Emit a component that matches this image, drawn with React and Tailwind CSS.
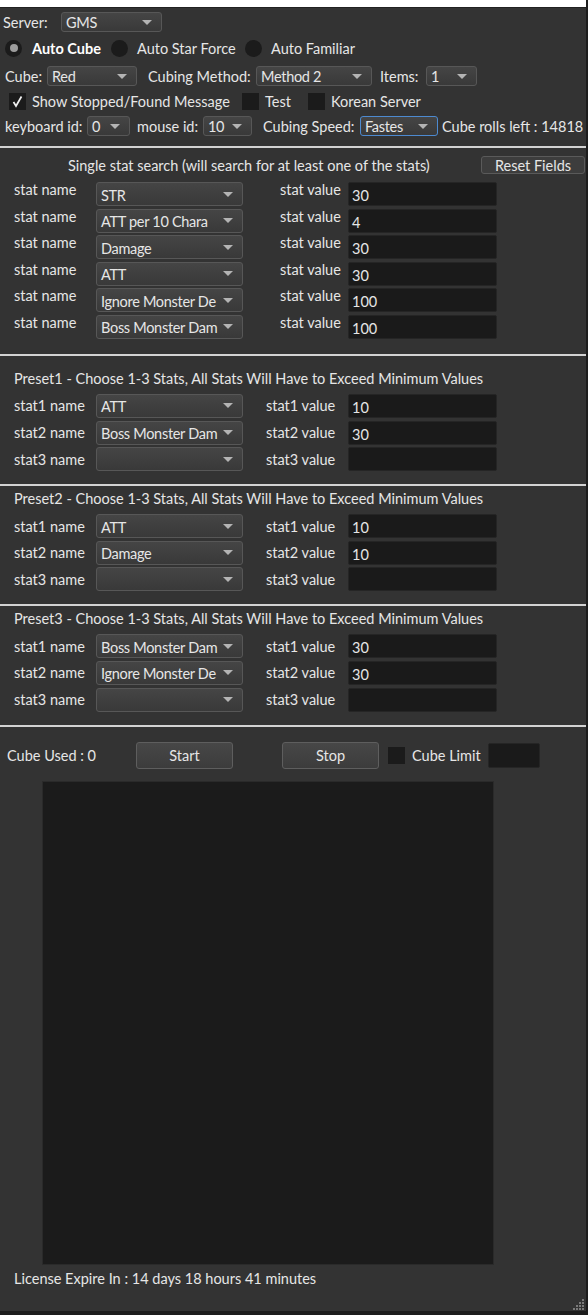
import React from 'react'

function Arrow() {
  return <span className="ml-[4px] mr-[9px] h-0 w-0 shrink-0 border-x-[5px] border-t-[5px] border-x-transparent border-t-[#b4b4b4]" />
}

function Drop({ className = '', text = '', focus = false, textClass = 'pt-[2px]' }) {
  return (
    <div
      className={`flex shrink-0 items-center rounded-[3px] border bg-gradient-to-b from-[#454545] to-[#393939] ${
        focus ? 'border-[#4d8ad0]' : 'border-[#575757]'
      } ${className}`}
    >
      <span className={`min-w-0 flex-1 whitespace-nowrap pl-[4px] tracking-[-0.3px] ${textClass}`}>{text}</span>
      <Arrow />
    </div>
  )
}

function Field({ className = '', value = '' }) {
  return (
    <div className={`flex shrink-0 items-center rounded-[2px] border border-[#252525] bg-[#1a1a1a] pl-[3px] pt-[3px] ${className}`}>
      {value}
    </div>
  )
}

function Radio({ checked }) {
  return (
    <span className="flex h-[17px] w-[17px] shrink-0 items-center justify-center rounded-full bg-[#1b1b1b]">
      {checked && <span className="h-[8px] w-[8px] rounded-full bg-[#9c9c9c]" />}
    </span>
  )
}

function Check({ checked }) {
  return (
    <span className="flex h-[17px] w-[17px] shrink-0 items-center justify-center bg-[#1b1b1b]">
      {checked && (
        <svg width="13" height="13" viewBox="0 0 13 13" fill="none">
          <path d="M2.5 7 L5 11 L10.5 1.5" stroke="#f0f0f0" strokeWidth="1.7" />
        </svg>
      )}
    </span>
  )
}

function Sep() {
  return <div className="h-[2px] bg-[#d2d2d2]" />
}

// dropdown texts are cut where the narrow combo boxes cut them
const singleStats = [
  ['STR', '30'],
  ['ATT per 10 Chara', '4'],
  ['Damage', '30'],
  ['ATT', '30'],
  ['Ignore Monster De', '100'],
  ['Boss Monster Dam', '100'],
]

const presets = [
  { title: 'Preset1', stats: [['ATT', '10'], ['Boss Monster Dam', '30'], ['', '']], top: 'mt-[14px]' },
  { title: 'Preset2', stats: [['ATT', '10'], ['Damage', '10'], ['', '']], top: 'mt-[3px]' },
  { title: 'Preset3', stats: [['Boss Monster Dam', '30'], ['Ignore Monster De', '30'], ['', '']], top: 'mt-[3px]' },
]

export default function App() {
  return (
    <div className="relative flex h-[1315px] w-[588px] flex-col overflow-hidden border-r-[2px] border-b-[4px] border-[#1d1d1d] bg-[#333333] font-[Lato,sans-serif] text-[14.5px] leading-[17px] text-[#e6e6e6]">
      <div className="h-[8px] shrink-0 border-b border-[#222] bg-white" />

      {/* server */}
      <div className="mt-[4px] flex h-[20px] items-center pl-[3px]">
        <span className="w-[58px]">Server:</span>
        <Drop className="h-[20px] w-[101px]" text="GMS" textClass="pl-[4px]" />
      </div>

      {/* mode radios */}
      <div className="mt-[5px] flex h-[22px] items-center pl-[5px]">
        <div className="flex w-[106px] items-center">
          <Radio checked />
          <span className="ml-[10px] font-bold text-white">Auto Cube</span>
        </div>
        <div className="flex w-[134px] items-center">
          <Radio />
          <span className="ml-[9px]">Auto Star Force</span>
        </div>
        <div className="flex items-center">
          <Radio />
          <span className="ml-[9px]">Auto Familiar</span>
        </div>
      </div>

      {/* cube row */}
      <div className="mt-[7px] flex h-[20px] items-center pl-[5px]">
        <span className="w-[42px]">Cube:</span>
        <Drop className="h-[20px] w-[90px]" text="Red" textClass="" />
        <span className="w-[119px] pl-[11px]">Cubing Method:</span>
        <Drop className="h-[20px] w-[116px]" text="Method 2" textClass="" />
        <span className="w-[54px] pl-[8px]">Items:</span>
        <Drop className="h-[20px] w-[51px]" text="1" textClass="" />
      </div>

      {/* checkboxes */}
      <div className="mt-[6px] flex h-[18px] items-center pl-[9px]">
        <div className="flex w-[233px] items-center">
          <Check checked />
          <span className="ml-[6px]">Show Stopped/Found Message</span>
        </div>
        <div className="flex w-[66px] items-center">
          <Check />
          <span className="ml-[6px]">Test</span>
        </div>
        <div className="flex items-center">
          <Check />
          <span className="ml-[6px]">Korean Server</span>
        </div>
      </div>

      {/* ids */}
      <div className="mt-[6px] flex h-[20px] items-center pl-[5px]">
        <span className="w-[82px]">keyboard id:</span>
        <Drop className="h-[20px] w-[43px]" text="0" textClass="" />
        <span className="w-[73px] pl-[7px]">mouse id:</span>
        <Drop className="h-[20px] w-[49px]" text="10" textClass="pl-[2px]" />
        <span className="w-[108px] pl-[11px] whitespace-nowrap">Cubing Speed:</span>
        <Drop className="h-[20px] w-[78px]" text="Fastes" focus textClass="" />
        <span className="pl-[4px] whitespace-nowrap">Cube rolls left : 14818</span>
      </div>

      <div className="mt-[10px]">
        <Sep />
      </div>

      {/* single stat header */}
      <div className="mt-[8px] flex h-[18px] items-center">
        <span className="flex-1 pl-[68px] whitespace-nowrap">Single stat search (will search for at least one of the stats)</span>
        <button className="mr-[1px] flex h-[18px] w-[104px] items-center justify-center rounded-[3px] border border-[#5a5a5a] bg-[#3d3d3d] pt-[1px] text-[#e6e6e6]">
          Reset Fields
        </button>
      </div>

      <div className="mt-[8px] flex flex-col gap-[2.6px]">
        {singleStats.map(([name, val], i) => (
          <div key={i} className="flex h-[24px] pl-[14px]">
            <span className="w-[82px] self-start leading-[15px]">stat name</span>
            <Drop className="h-[24px] w-[147px]" text={name} />
            <span className="ml-[37px] w-[68px] self-start leading-[15px] whitespace-nowrap">stat value</span>
            <Field className="h-[24px] w-[149px]" value={val} />
          </div>
        ))}
      </div>

      {presets.map((p, pi) => (
        <React.Fragment key={pi}>
          <div className={pi === 0 ? 'mt-[15px]' : 'mt-[13px]'}>
            <Sep />
          </div>
          <div className={`${p.top} flex h-[18px] items-center pl-[14px] whitespace-nowrap`}>
            {p.title} - Choose 1-3 Stats, All Stats Will Have to Exceed Minimum Values
          </div>
          <div className={`${pi === 0 ? 'mt-[6px]' : 'mt-[7px]'} flex flex-col gap-[2.6px]`}>
            {p.stats.map(([name, val], i) => (
              <div key={i} className="flex h-[24px] items-center pl-[14px]">
                <span className="w-[82px] whitespace-nowrap">stat{i + 1} name</span>
                <Drop className="h-[24px] w-[147px]" text={name} />
                <span className="ml-[23px] w-[82px] whitespace-nowrap">stat{i + 1} value</span>
                <Field className="h-[24px] w-[149px]" value={val} />
              </div>
            ))}
          </div>
        </React.Fragment>
      ))}

      <div className="mt-[13px]">
        <Sep />
      </div>

      {/* controls */}
      <div className="mt-[15px] flex h-[27px] items-center pl-[7px]">
        <span className="w-[129px]">Cube Used : 0</span>
        <button className="flex h-[27px] w-[97px] items-center justify-center rounded-[3px] border border-[#5e5e5e] bg-gradient-to-b from-[#474747] to-[#3c3c3c] text-[#e6e6e6]">
          Start
        </button>
        <button className="ml-[49px] flex h-[27px] w-[97px] items-center justify-center rounded-[3px] border border-[#5e5e5e] bg-gradient-to-b from-[#474747] to-[#3c3c3c] text-[#e6e6e6]">
          Stop
        </button>
        <span className="ml-[9px]">
          <Check />
        </span>
        <span className="w-[83px] pl-[7px] whitespace-nowrap">Cube Limit</span>
        <Field className="h-[25px] w-[52px]" />
      </div>

      <div className="mt-[12px] ml-[42px] h-[484px] w-[452px] border border-[#2a2a2a] bg-[#1b1b1b]" />

      <div className="mt-[5px] h-[16px] pl-[14px]">License Expire In : 14 days 18 hours 41 minutes</div>

      <svg className="absolute right-[1px] bottom-[1px]" width="12" height="12" viewBox="0 0 12 12">
        {[
          [10, 2], [10, 5], [7, 5], [10, 8], [7, 8], [4, 8], [10, 11], [7, 11], [4, 11], [1, 11],
        ].map(([x, y], i) => (
          <rect key={i} x={x - 1} y={y - 1} width="2" height="2" fill="#7a7a7a" />
        ))}
      </svg>
    </div>
  )
}
